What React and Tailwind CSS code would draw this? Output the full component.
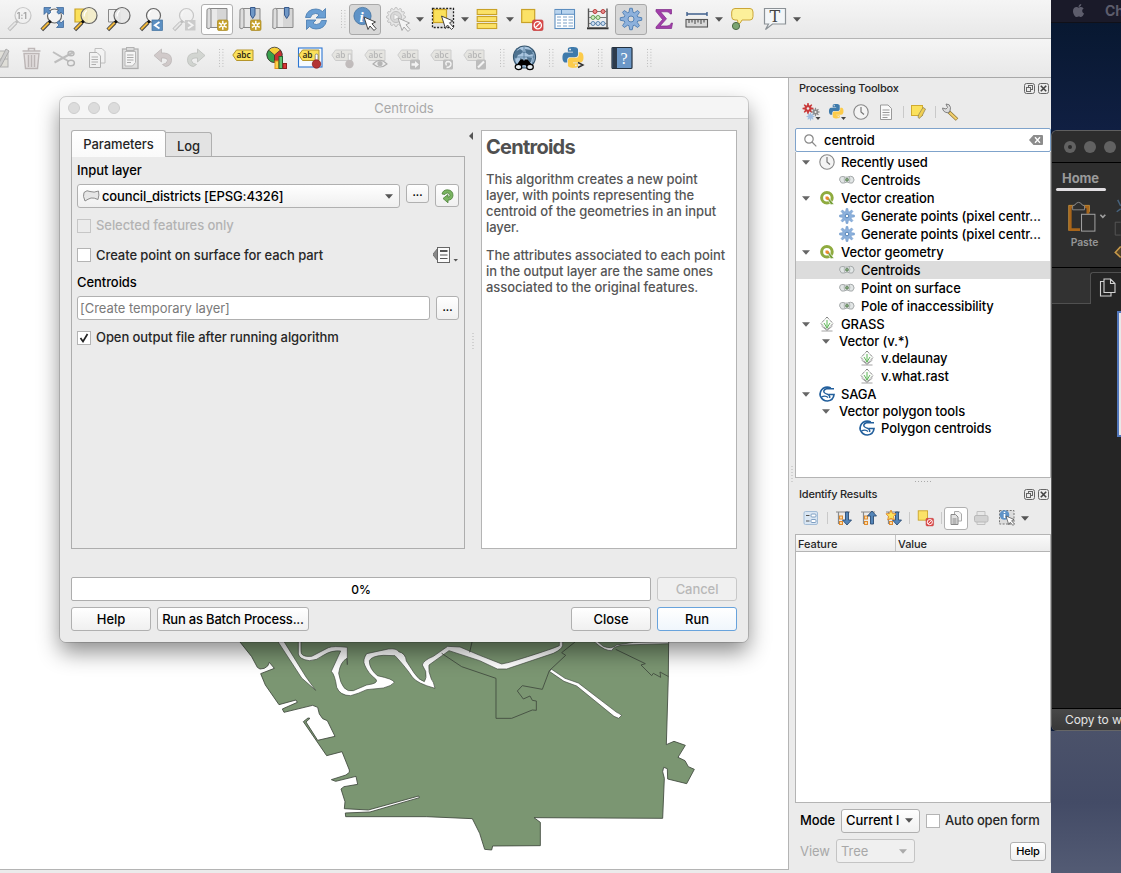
import React from "react";
import { FaApple } from "react-icons/fa";

const PY_TOP =
  "M14.25.18l.9.2.73.26.59.3.45.32.34.34.25.34.16.33.1.3.04.26.02.2-.01.13V8.5l-.05.63-.13.55-.21.46-.26.38-.3.31-.33.25-.35.19-.35.14-.33.1-.3.07-.26.04-.21.02H8.77l-.69.05-.59.14-.5.22-.41.27-.33.32-.27.35-.2.36-.15.37-.1.35-.07.32-.04.27-.02.21v3.06H3.17l-.21-.03-.28-.07-.32-.12-.35-.18-.36-.26-.36-.36-.35-.46-.32-.59-.28-.73-.21-.88-.14-1.05-.05-1.23.06-1.22.16-1.04.24-.87.32-.71.36-.57.4-.44.42-.33.42-.24.4-.16.36-.1.32-.05.24-.01h.16l.06.01h8.16v-.83H6.18l-.01-2.75-.02-.37.05-.34.11-.31.17-.28.25-.26.31-.23.38-.2.44-.18.51-.15.58-.12.64-.1.71-.06.77-.04.84-.02 1.27.05zm-6.3 1.98l-.23.33-.08.41.08.41.23.34.33.22.41.09.41-.09.33-.22.23-.34.08-.41-.08-.41-.23-.33-.33-.22-.41-.09-.41.09z";
const PY_BOTTOM =
  "M21.1 6.11l.28.06.32.12.35.18.36.27.36.35.35.47.32.59.28.73.21.88.14 1.04.05 1.23-.06 1.23-.16 1.04-.24.86-.32.71-.36.57-.4.45-.42.33-.42.24-.4.16-.36.09-.32.05-.24.02-.16-.01h-8.22v.82h5.84l.01 2.76.02.36-.05.34-.11.31-.17.29-.25.25-.31.24-.38.2-.44.17-.51.15-.58.13-.64.09-.71.07-.77.04-.84.01-1.27-.04-1.07-.14-.9-.2-.73-.25-.59-.3-.45-.33-.34-.34-.25-.34-.16-.33-.1-.3-.04-.25-.02-.2.01-.13v-5.34l.05-.64.13-.54.21-.46.26-.38.3-.32.33-.24.35-.2.35-.14.33-.1.3-.06.26-.04.21-.02.13-.01h5.84l.69-.05.59-.14.5-.21.41-.28.33-.32.27-.35.2-.36.15-.36.1-.35.07-.32.04-.28.02-.21V6.07h2.09l.14.01zm-6.47 14.25l-.23.33-.08.41.08.41.23.33.33.23.41.08.41-.08.33-.23.23-.33.08-.41-.08-.41-.23-.33-.33-.23-.41-.08-.41.08z";

function gearPath(cx, cy, outer, inner, teeth) {
  let d = "";
  for (let i = 0; i < teeth; i++) {
    const a = (i / teeth) * Math.PI * 2 - Math.PI / 2;
    const s = Math.PI / teeth;
    [[-0.75, inner], [-0.3, outer], [0.3, outer], [0.75, inner]].forEach(([k, r], j) => {
      d += (i === 0 && j === 0 ? "M" : "L") + (cx + r * Math.cos(a + k * s)).toFixed(2) + " " + (cy + r * Math.sin(a + k * s)).toFixed(2);
    });
  }
  return d + "Z";
}

function Ic({ children, faded }) {
  return (
    <svg viewBox="0 0 24 24" className={faded ? "size-6 shrink-0 opacity-40 grayscale-[60%] overflow-visible" : "size-6 shrink-0 overflow-visible"} fill="none">
      {children}
    </svg>
  );
}

function Slot({ children, state }) {
  return (
    <div className="flex w-[33px] shrink-0 items-center justify-center">
      {state ? (
        <div
          className={
            state === "on"
              ? "flex h-[31px] w-[32px] shrink-0 items-center justify-center rounded-[3px] border border-[#a9a9a9] bg-[#d8d8d8]"
              : "flex h-[31px] w-[32px] shrink-0 items-center justify-center rounded-[3px] border border-[#b0b0b0] bg-[#fdfdfd]"
          }
        >
          {children}
        </div>
      ) : (
        children
      )}
    </div>
  );
}

function Arrow() {
  return (
    <div className="flex w-[11.7px] shrink-0 items-center justify-center">
      <svg viewBox="0 0 8 5" className="h-[5px] w-[8px]"><path d="M0 .3H8L4 4.8Z" fill="#555" /></svg>
    </div>
  );
}

function Dots({ wide }) {
  return (
    <div className={wide ? "flex w-[16.5px] shrink-0 items-center justify-end pr-[3px]" : "flex w-[16px] shrink-0 items-center justify-end pr-[3px]"}>
      <svg viewBox="0 0 5 18" className="h-[18px] w-[5px]">
        {[0, 2.8, 5.6, 8.4, 11.2, 14, 16.8].map((y) => (
          <g key={y} fill="#bdbdbd"><rect x="0" y={y} width="1" height="1" /><rect x="3.4" y={y} width="1" height="1" /></g>
        ))}
      </svg>
    </div>
  );
}

function Mag({ x = 16, y = 8.5, r = 7.3, tint = "#f4f4f4", grey, fade = 0.8 }) {
  return (
    <g>
      <circle cx={x} cy={y} r={r} fill={tint} fillOpacity={fade} stroke={grey ? "#888" : "#666"} strokeWidth="1.2" />
      <path d={`M${x - 2} ${y - 5}Q${x - 5} ${y - 3} ${x - 4.8} ${y + 1}`} stroke="#fff" strokeWidth="1.3" />
      <path d="M10.8 13.8L8.5 16" stroke={grey ? "#777" : "#111"} strokeWidth="3" />
      <path d="M8.7 15.8L1.8 22.8" stroke={grey ? "#777" : "#444"} strokeWidth="3.8" />
      <path d="M8.7 15.6L2.2 22.2" stroke={grey ? "#ddd" : "#f2b93b"} strokeWidth="2" />
    </g>
  );
}

function Cursor({ x = 0, y = 0, c = "#444" }) {
  return <path transform={`translate(${x} ${y})`} d="M0 0L11.5 5L8 6.8L12 11.5L10 13.5L6 9L4 12.5Z" fill="#fff" stroke={c} strokeWidth="1" />;
}

function Scroll({ mark }) {
  return (
    <g>
      <path d="M5 1.5H22V20.5H5Z" fill="#d6d6d6" stroke="#888" strokeWidth="1" />
      <path d="M6 2H12V20H6Z" fill="#e9e9e9" />
      <path d="M2 2.5Q5.500 0 6 3V20Q4 23 1.800 21Z" fill="#ddd" stroke="#888" strokeWidth="1" />
      {mark && (
        <g>
          <rect x="12.500" y="13" width="10.500" height="10.500" rx="1.500" fill="#c8a42c" stroke="#a8871f" strokeWidth=".7" />
          <path d={gearPath(17.8, 18.2, 4.6, 2, 6)} fill="#fff" />
          <circle cx="17.800" cy="18.200" r="1.100" fill="#c8a42c" />
        </g>
      )}
    </g>
  );
}

function Ribbon({ x = 12.5 }) {
  return <path d={`M${x} .5H${x + 4.5}V8L${x + 2.2} 11.5L${x} 8Z`} fill="#6f97c6" stroke="#37598c" strokeWidth="1" />;
}

function Tag({ text = "abc", color }) {
  return (
    <g>
      <path d="M.8 9L4.500 4H21V14.500H4.500Z" fill={color || "#fbe15b"} stroke={color ? "#999" : "#b5952a"} strokeWidth="1" />
      <text x="4.500" y="12.200" fontSize="8.300" fontFamily="Noto Sans, sans-serif" fontWeight="600" fill={color ? "#666" : "#2e2a12"}>{text}</text>
    </g>
  );
}

const PyIcon = () => (
  <g>
    <g transform="translate(1.500 1) scale(.87)">
      <path d={PY_TOP} fill="#3e7aab" />
      <path d={PY_BOTTOM} fill="#fccb4a" />
    </g>
    <path d="M17 16.500L22 19L17 21.500" stroke="#333" strokeWidth="1.400" />
  </g>
);

const Deselect = () => (
  <g>
    <rect x="1.700" y="2.500" width="13" height="13" fill="#fbe267" stroke="#c9a227" strokeWidth="1.200" />
    <rect x="12.500" y="13" width="10.500" height="10.500" rx="1.500" fill="#dc4a4a" stroke="#c43a3a" strokeWidth=".7" />
    <circle cx="17.800" cy="18.200" r="3.600" stroke="#fff" strokeWidth="1.300" />
    <path d="M15.200 20.800L20.400 15.600" stroke="#fff" strokeWidth="1.300" />
  </g>
);

function TopToolbar() {
  return (
    <div className="flex h-[39px] shrink-0 overflow-hidden border-b border-[#b4b4b4] bg-gradient-to-b from-[#f5f5f5] to-[#e8e8e8] pl-[2px]">
      <Slot>
        <Ic faded>
          <Mag grey r={8} />
          <text x="9.800" y="11.800" fontSize="8.500" fontWeight="700" fontFamily="Inter, sans-serif" fill="#333">1:1</text>
        </Ic>
      </Slot>
      <Slot>
        <Ic>
          <Mag x={14.5} y={9} r={7} />
          <g fill="#5e8fc4" stroke="#345f93" strokeWidth=".7">
            <path d="M4 .5H11L8.700 2.800L11 5L9 7.200L6.500 5L4 7.500Z" />
            <path d="M23.500 .5V7.500L21 5L18.800 7.200L16.800 5L19 2.800L16.500 .5Z" />
            <path d="M23.500 20.500H16.500L19 18L16.800 15.800L19 13.600L21 16L23.500 13.500Z" />
          </g>
        </Ic>
      </Slot>
      <Slot><Ic><path d="M2 2H14V15H2Z" fill="#fbe15b" stroke="#c9a227" strokeWidth="1.200" /><Mag r={8} tint="#f3edc9" fade={0.92} /></Ic></Slot>
      <Slot><Ic><path d="M2.500 2.500H14V15H2.500Z" fill="#efefef" stroke="#888" /><Mag r={8} tint="#e6e6e6" fade={0.9} /></Ic></Slot>
      <Slot>
        <Ic>
          <Mag x={14.5} y={8.5} r={7} />
          <rect x="13" y="13" width="10.500" height="10.500" fill="#5b8fc2" stroke="#41719f" strokeWidth=".7" />
          <path d="M20.500 15L15.800 18.200L20.500 21.400" stroke="#fff" strokeWidth="1.800" />
        </Ic>
      </Slot>
      <Slot>
        <Ic faded>
          <Mag x={14.5} y={8.5} r={7} grey />
          <rect x="13" y="13" width="10.500" height="10.500" fill="#999" />
          <path d="M16 15L20.700 18.200L16 21.400" stroke="#fff" strokeWidth="1.800" />
        </Ic>
      </Slot>
      <Slot state="off"><Ic><Scroll mark /></Ic></Slot>
      <Slot><Ic><Scroll mark /><Ribbon /></Ic></Slot>
      <Slot><Ic><Scroll /><Ribbon x={13.5} /></Ic></Slot>
      <Slot>
        <Ic>
          <path d="M1.500 10.500Q3 2 12 2Q16 2 18.500 4.500L21.500 1.500V11H12L15 8Q13.500 6.500 11.500 6.500Q7.500 6.500 6.500 10.500Z" fill="#6a9fd4" stroke="#4579ad" strokeWidth=".8" />
          <path d="M22.500 13.500Q21 22 12 22Q8 22 5.500 19.500L2.500 22.500V13H12L9 16Q10.500 17.500 12.500 17.500Q16.500 17.500 17.500 13.500Z" fill="#6a9fd4" stroke="#4579ad" strokeWidth=".8" />
        </Ic>
      </Slot>
      <Dots wide />
      <Slot state="on">
        <Ic>
          <circle cx="9.500" cy="9" r="8.600" fill="#5f93c7" stroke="#41719f" strokeWidth=".8" />
          <text x="6.500" y="14.500" fontSize="15" fontFamily="Liberation Serif, serif" fontStyle="italic" fontWeight="700" fill="#fff">i</text>
          <Cursor x={11} y={10} />
        </Ic>
      </Slot>
      <Slot>
        <Ic faded>
          <path d={gearPath(10, 10, 9.5, 7.8, 12)} fill="#ddd" stroke="#777" />
          <circle cx="10" cy="10" r="5.500" fill="#bbb" stroke="#777" />
          <path d="M8 7L13.500 10L8 13Z" fill="#fff" stroke="#666" strokeWidth=".6" />
          <Cursor x={12} y={11} />
        </Ic>
      </Slot>
      <Arrow />
      <Slot>
        <Ic>
          <rect x="1.500" y="1.500" width="21" height="19" fill="#e0e0e0" stroke="#222" strokeWidth="1.300" strokeDasharray="2 1.400" />
          <rect x="2.500" y="2.500" width="13" height="13" fill="#fbe15b" stroke="#c9a227" strokeWidth="1.200" />
          <Cursor x={10.5} y={9} />
        </Ic>
      </Slot>
      <Arrow />
      <Slot>
        <Ic>
          <g fill="#fbe267" stroke="#c9a227" strokeWidth="1.100">
            <rect x="2.200" y="2.500" width="19.500" height="5" /><rect x="2.200" y="9.500" width="19.500" height="5" /><rect x="2.200" y="16.500" width="19.500" height="5" />
          </g>
        </Ic>
      </Slot>
      <Arrow />
      <Slot><Ic><Deselect /></Ic></Slot>
      <Slot>
        <Ic>
          <rect x="2" y="2.500" width="19.500" height="19" fill="#fff" stroke="#5c8ec0" strokeWidth="1.100" />
          <rect x="2.500" y="3" width="18.500" height="4" fill="#b9d4ee" />
          <path d="M2 7.300H21.500M8.500 2.500V7" stroke="#5c8ec0" />
          <path d="M4 10H8M10 10H14M15.500 10H20M4 13H8M10 13H14M15.500 13H20M4 16H8M10 16H14M15.500 16H20M4 19H8M10 19H14M15.500 19H20" stroke="#7ba0c6" />
        </Ic>
      </Slot>
      <Slot>
        <Ic>
          <path d="M2.500 1.500V20M21 1.500V20" stroke="#555" strokeWidth="1.400" />
          <path d="M1 21.300H22.500" stroke="#333" strokeWidth="2" />
          <path d="M3 4.500H21M3 10.500H21M3 16.500H21" stroke="#777" />
          <g fill="#e88b8b" stroke="#b93c3c"><circle cx="9" cy="4.500" r="2" /><circle cx="17" cy="4.500" r="2" /></g>
          <g fill="#cdeebf" stroke="#68a057"><circle cx="7" cy="10.500" r="2" /><circle cx="12" cy="10.500" r="2" /></g>
          <g fill="#cfe1f3" stroke="#5b85b0"><circle cx="7" cy="16.500" r="2" /><circle cx="12" cy="16.500" r="2" /><circle cx="17" cy="16.500" r="2" /></g>
        </Ic>
      </Slot>
      <Slot state="on">
        <Ic>
          <path d={gearPath(12, 12, 10.8, 7, 8)} fill="#8db1dc" stroke="#5583b6" strokeWidth="1" strokeLinejoin="round" />
          <circle cx="12" cy="12" r="3" fill="#d8d8d8" stroke="#5583b6" />
        </Ic>
      </Slot>
      <Slot>
        <Ic><path d="M4 2.500H19.500V7H18.200Q17.700 4.800 15 4.800H8.500L14.500 11.800L8 19H15Q18.500 19 19.300 16H20.500L19.500 21.500H4V20L10.500 12.500L4 4.500Z" fill="#a23eaa" stroke="#7d2a86" strokeWidth=".7" /></Ic>
      </Slot>
      <Slot>
        <Ic>
          <path d="M2 7H22M2 5V9M22 5V9" stroke="#3f5f8c" strokeWidth="1.400" />
          <rect x="1" y="12.500" width="21.500" height="7.500" fill="#d9d9d9" stroke="#555" strokeWidth="1.100" />
          <path d="M4 13V16M7 13V15.500M10 13V17M13 13V15.500M16 13V17M19 13V15.500" stroke="#444" />
        </Ic>
      </Slot>
      <Arrow />
      <Slot>
        <Ic>
          <path d="M5 1.500H20Q23 1.500 23 5V9.500Q23 13 20 13H12Q11 16.500 7 18Q8.500 15 7.500 13H5Q1.700 13 1.700 9.500V5Q1.700 1.500 5 1.500Z" fill="#fcf09a" stroke="#cba638" strokeWidth="1" />
          <circle cx="6" cy="19" r="3.600" fill="#7ba571" stroke="#4d6b47" />
        </Ic>
      </Slot>
      <Slot>
        <Ic>
          <path d="M1.500 1.500H22.500V17H9.500L2.500 22.500L5.500 17H1.500Z" fill="#f3f6f8" stroke="#8b9196" strokeWidth="1.200" />
          <text x="6.500" y="14.500" fontSize="16" fontFamily="DejaVu Serif, serif" fill="#444">T</text>
        </Ic>
      </Slot>
      <Arrow />
    </div>
  );
}

function SecondToolbar() {
  const badge = (kind) => (
    <g>
      <rect x="13" y="13.500" width="10" height="10" rx="1.500" fill="#777" />
      {kind === "arrow" && <path d="M14.500 17.300H18V15L22 18.500L18 22V19.700H14.500Z" fill="#fff" />}
      {kind === "rot" && <path d="M16.500 19.500Q14.500 15.500 18.500 15.500Q21.500 16 20.800 19Q20 21.500 16.500 21.500" stroke="#fff" strokeWidth="1.500" />}
      {kind === "pen" && <path d="M15 21.500L21 15.500" stroke="#fff" strokeWidth="2.200" />}
    </g>
  );
  return (
    <div className="flex h-[39px] shrink-0 overflow-hidden border-b border-[#a8a8a8] bg-gradient-to-b from-[#f5f5f5] to-[#e8e8e8]">
      <div className="flex w-[14.5px] shrink-0 items-center justify-end overflow-hidden pr-[6px]">
        <Ic faded>
          <rect x="2" y="5" width="21" height="16" fill="#cfc9a4" stroke="#555" />
          <path d="M2 13H23" stroke="#555" />
          <path d="M13 19L21 3L24 5L16 20L12.500 22Z" fill="#999" stroke="#444" />
        </Ic>
      </div>
      <Slot>
        <Ic faded>
          <path d="M5 7.500L6.500 22.500H18.500L20 7.500Z" fill="#e5c8c8" stroke="#865f5f" strokeWidth="1.400" />
          <path d="M3.500 5H21.500M9.500 5V2.500H15.500V5M9.500 9V21M12.500 9V21M15.500 9V21" stroke="#865f5f" strokeWidth="1.500" />
        </Ic>
      </Slot>
      <Slot>
        <Ic faded>
          <path d="M1 6L17 15.500M2.500 16.500L21 6.500" stroke="#777" strokeWidth="2" />
          <ellipse cx="19" cy="7.500" rx="3" ry="2.300" stroke="#666" strokeWidth="1.400" /><ellipse cx="19" cy="17" rx="3.400" ry="2.800" stroke="#666" strokeWidth="1.400" />
        </Ic>
      </Slot>
      <Slot>
        <Ic faded>
          <path d="M10 2.500H17L20 5.500V17H10Z" fill="#f8f8f8" stroke="#777" />
          <path d="M4.500 6.500H12L15.500 10V21.500H4.500Z" fill="#f8f8f8" stroke="#555" />
          <path d="M6.500 11H13M6.500 13.500H13M6.500 16H13M6.500 18.500H11" stroke="#555" />
        </Ic>
      </Slot>
      <Slot>
        <Ic faded>
          <rect x="4.500" y="3" width="15.500" height="19.500" fill="#ccc" stroke="#555" strokeWidth="1.300" />
          <path d="M7 5.500H17.500V16.500L14.500 20H7Z" fill="#fff" stroke="#666" />
          <rect x="8.500" y="1.500" width="7.500" height="3" fill="#bbb" stroke="#555" />
          <path d="M9 9H15.500M9 11.500H15.500M9 14H15.500M9 16.500H13" stroke="#444" />
        </Ic>
      </Slot>
      <Slot><Ic faded><path d="M3 9.500L10.500 3V7H13Q21 7.500 20.500 14.500Q20 20 14.500 20.500L11.500 18.500Q16.500 17.500 16.500 14.500Q16.500 12 13 12H10.500V16Z" fill="#b98f8f" stroke="#7c5c5c" strokeWidth=".8" /></Ic></Slot>
      <Slot><Ic faded><path d="M21 9.500L13.500 3V7H11Q3 7.500 3.500 14.500Q4 20 9.500 20.500L12.500 18.500Q7.500 17.500 7.500 14.500Q7.500 12 11 12H13.500V16Z" fill="#9fb49a" stroke="#687a64" strokeWidth=".8" /></Ic></Slot>
      <div className="flex w-[15px] shrink-0 items-center justify-end pr-[1px]"><Dots /></div>
      <Slot><Ic><Tag /></Ic></Slot>
      <Slot>
        <Ic>
          <circle cx="9.500" cy="8.800" r="7.600" fill="#f6cf38" stroke="#333" strokeWidth=".8" />
          <path d="M9.500 9L3.600 4A7.600 7.600 0 0 0 9.500 16.400Z" fill="#37a04c" stroke="#333" strokeWidth=".7" />
          <path d="M9.500 9L15.400 4A7.600 7.600 0 0 1 9.500 16.400Z" fill="#c92f2f" stroke="#333" strokeWidth=".7" />
          <rect x="10" y="15" width="3.500" height="7.500" fill="#fbd34c" stroke="#e28f1a" /><rect x="14" y="10.500" width="3.500" height="12" fill="#5fc06f" stroke="#28632f" /><rect x="18" y="17.500" width="3.500" height="5" fill="#d93636" stroke="#8f1c1c" />
        </Ic>
      </Slot>
      <Slot>
        <Ic>
          <rect x=".5" y="2" width="23.500" height="19" fill="#f6fafe" stroke="#2c76d2" strokeWidth="1.100" />
          <Tag text="ab" />
          <rect x="17.200" y="8" width="2.800" height="9" rx="1.400" fill="#fff" stroke="#777" strokeWidth=".8" />
          <circle cx="18.500" cy="18" r="4.200" fill="#b33434" stroke="#8b2222" strokeWidth=".8" />
        </Ic>
      </Slot>
      <Slot><Ic faded><Tag text="ab" color="#d9d4bb" /><rect x="17.200" y="8" width="2.800" height="9" fill="#fff" stroke="#777" strokeWidth=".8" /><circle cx="18.500" cy="18" r="4.200" fill="#8f7070" /></Ic></Slot>
      <Slot><Ic faded><Tag color="#d9d4bb" /><path d="M9 18Q16 10.500 23 18Q16 24 9 18Z" fill="#eee" stroke="#555" strokeWidth="1.100" /><circle cx="16" cy="17.500" r="2.600" fill="#666" /></Ic></Slot>
      <Slot><Ic faded><Tag color="#d9d4bb" />{badge("arrow")}</Ic></Slot>
      <Slot><Ic faded><Tag color="#d9d4bb" />{badge("rot")}</Ic></Slot>
      <Slot><Ic faded><Tag color="#d9d4bb" />{badge("pen")}</Ic></Slot>
      <Dots />
      <Slot>
        <Ic>
          <circle cx="12.500" cy="11" r="11" fill="#aac6e0" stroke="#37566f" strokeWidth="1.200" />
          <path d="M3 6L8 3L11 5L9 8L6 9L4 13L2 10ZM13 3L19 4L21 8L17 9L14 7ZM15 11L20 12L19 16L16 17ZM8 12L11 13L9 16Z" fill="#4f7390" />
          <path d="M12 0V22M2 11H23M3 5Q12 8 21 5M5 2Q0 11 5 20M19 2Q24 11 19 20" stroke="#48708f" strokeWidth=".7" />
          <path d="M4 20L8.500 13.500H11L12 15L13 13.500H15.500L21 20L17 22L13 19H11L7 22Z" fill="#000" />
          <ellipse cx="6.500" cy="21" rx="3.300" ry="2.600" fill="#e6edf2" stroke="#000" strokeWidth="1.200" /><ellipse cx="18" cy="21" rx="3.300" ry="2.600" fill="#e6edf2" stroke="#000" strokeWidth="1.200" />
        </Ic>
      </Slot>
      <Dots />
      <Slot><Ic><PyIcon /></Ic></Slot>
      <Dots />
      <Slot>
        <Ic>
          <rect x="2" y="1.500" width="20" height="21" rx="1" fill="#6b97c7" stroke="#23303e" strokeWidth="1.200" />
          <rect x="2.500" y="2" width="4.500" height="20" fill="#2d3b4c" />
          <text x="10.500" y="17.500" fontSize="16" fontFamily="Liberation Serif, serif" fill="#fff">?</text>
        </Ic>
      </Slot>
      <Dots />
    </div>
  );
}

function MapCanvas() {
  return (
    <svg viewBox="0 0 788 791" className="h-[791px] w-[788px]">
      <g transform="translate(220 552) scale(.33333)" strokeLinejoin="round" stroke="#414a3f" strokeWidth="2.600">
        <path
          fill="#7b9672"
          d="M60 36L95 80L112 112L120 117L133 115L143 108L148 97L163 115L122 131L136 165L177 224L228 210L232 217L187 237L192 247L278 226L293 232L298 252L308 266L322 272L345 319L293 331L258 276L270 265L264 264L250 275L320 377L366 365L388 420L388 427L378 435L334 449L347 454L408 439L413 463L372 470L363 477L375 515L373 536L445 540L596 498L598 503L450 546L376 549L377 560L620 560L757 566L779 610L794 658L815 660L818 648L961 647L961 577L942 563L1328 565L1333 445L1328 425L1331 412L1342 416L1343 447L1400 461L1423 418L1405 410L1395 392L1374 382L1396 346L1362 334L1339 344L1345 140L1346 20L60 20Z"
        />
        <path
          fill="#fff"
          strokeWidth="2"
          d="M235 20V72Q238 88 268 92Q290 92 310 76Q335 60 362 63L334 124Q345 135 350 172Q360 197 392 197Q415 191 440 179L490 174Q515 168 523 157Q520 147 472 137Q447 115 448 92Q455 78 490 76L525 77Q560 115 577 141Q590 160 645 175Q641 155 634 147Q624 125 627 105L687 62L779 92L832 117L860 117L1000 70Q1026 58 1028 46V20H1018V47Q990 60 868 97L845 102L779 76L720 51L683 49L640 79Q610 91 607 105L617 124Q621 145 613 155Q596 150 583 130L559 93Q557 70 536 65Q530 54 505 57L440 71Q427 90 434 105Q444 130 467 147Q479 160 440 165L400 182Q366 190 356 130Q361 95 381 85L382 104V52Q340 47 325 53L275 79Q241 82 243 62V20Z"
        />
        <path fill="#fff" strokeWidth="2" d="M164 20L183 20L258 141L287 181L245 144Z" />
        <path fill="#fff" strokeWidth="2" d="M988 124L995 118L1035 145L1075 159L1190 247L1196 250L1205 256L1196 265L1182 259L1070 168L1032 154Z" />
        <path fill="#fff" strokeWidth="2" d="M1108 20L1128 40Q1155 63 1175 62Q1180 49 1210 45L1346 41V34L1240 37L1190 45Q1175 59 1150 49L1132 34Z" />
        <path fill="none" d="M749 67L756 36M665 70L725 110L828 145V265H875L937 240L949 241V213L937 211L930 198L910 207L892 183L907 167L967 178L988 122L1037 76L1025 68L1065 36M1187 58L1276 101L1263 105L1295 137L1300 130L1322 142L1320 126L1346 140" />
      </g>
    </svg>
  );
}

const BTN = "flex shrink-0 items-center justify-center rounded-[3px] border border-[#b0b0b0] bg-gradient-to-b from-white to-[#f0f0f0]";

function Check({ on, off }) {
  return (
    <div className={off ? "size-[14px] shrink-0 border border-[#c6c6c6] bg-[#ebebeb]" : "flex size-[14px] shrink-0 items-center justify-center border border-[#b4b4b4] bg-white"}>
      {on && <svg viewBox="0 0 10 10" className="size-[10px]"><path d="M1.500 5L4 8.500L8.500 1" fill="none" stroke="#222" strokeWidth="1.700" /></svg>}
    </div>
  );
}

function Dialog() {
  return (
    <div className="absolute left-[60px] top-[97px] flex h-[545px] w-[688px] flex-col overflow-hidden rounded-[6px] bg-[#ebebeb] text-[13px] font-medium text-[#262626] outline outline-1 outline-black/15">
      <div className="flex h-[22px] shrink-0 items-center border-b border-[#cfcfcf] bg-[#f5f5f5] pl-[8px]">
        <div className="flex w-[60px] gap-[8px]">
          <div className="size-[12px] rounded-full border border-[#cdcdcd] bg-[#dcdcdc]" />
          <div className="size-[12px] rounded-full border border-[#cdcdcd] bg-[#dcdcdc]" />
          <div className="size-[12px] rounded-full border border-[#cdcdcd] bg-[#dcdcdc]" />
        </div>
        <div className="flex-1 pr-[68px] pt-px text-center font-normal tracking-[0px] text-[#a9a9a9]">Centroids</div>
      </div>
      <div className="flex flex-1 flex-col px-[11px] pt-[11px]">
        <div className="flex h-[419px]">
          <div className="flex w-[394px] shrink-0 flex-col">
            <div className="flex h-[26px] items-end">
              <div className="relative z-10 -mb-[1px] flex h-[27px] w-[95px] items-center justify-center rounded-t-[3px] border border-b-0 border-[#b0b0b0] bg-gradient-to-b from-white to-[#fafafa] pt-[1px]">Parameters</div>
              <div className="flex h-[24px] w-[46px] items-center justify-center rounded-tr-[3px] border border-b-0 border-l-0 border-[#b0b0b0] bg-[#e3e3e3] pt-[3px]">Log</div>
            </div>
            <div className="flex flex-1 flex-col border border-[#adadad] px-[5px]">
              <div className="flex h-[27px] items-center text-black">Input layer</div>
              <div className="flex h-[24px] justify-between">
                <div className="flex h-[24px] w-[323px] items-center rounded-[3px] border border-[#b0b0b0] bg-gradient-to-b from-white to-[#efefef] pl-[4px] pr-[6px] text-black">
                  <svg viewBox="0 0 18 14" className="mr-[2px] h-[14px] w-[18px]"><path d="M2 3.500Q5 .5 8 2.500Q12 4 16.500 2Q17.500 6 16 10.500Q12 8.500 9 9Q6 10 3 12Q.5 7 2 3.500Z" fill="#e6e6e6" stroke="#8b8b8b" /></svg>
                  <span className="flex-1 tracking-[-0.14px]">council_districts [EPSG:4326]</span>
                  <svg viewBox="0 0 8 5" className="h-[5px] w-[8px]"><path d="M0 .3H8L4 4.800Z" fill="#555" /></svg>
                </div>
                <div className={`${BTN} h-[19px] w-[23px] pb-[3px] text-[10px] font-bold text-black`}>...</div>
                <div className={`${BTN} h-[23px] w-[24px]`}>
                  <svg viewBox="0 0 16 16" className="size-[16px]"><path d="M3 6Q4 1.800 8.500 1.800Q14 2.200 14 7.500Q13.500 12 9 12.200V14.800L4 10.500L9 6.500V9.200Q11 9 11 7.300Q10.800 5 8.300 5Q6.500 5 6 6.500Z" fill="#79b461" stroke="#4c8038" strokeWidth=".8" /></svg>
                </div>
              </div>
              <div className="flex h-[35px] items-center gap-[5px] text-[#b3b3b3]"><Check off />Selected features only</div>
              <div className="flex h-[24px] items-center gap-[5px]">
                <Check /><span className="flex-1">Create point on surface for each part</span>
                <svg viewBox="0 0 26 18" className="h-[18px] w-[26px]">
                  <path d="M4.500 2.500L-.3 8.500L4.500 14.500Z" fill="#888" stroke="#666" strokeWidth=".8" />
                  <rect x="4.500" y="1.500" width="12" height="15" fill="#fafafa" stroke="#666" />
                  <path d="M7 5H14.500" stroke="#555" strokeWidth="2" /><path d="M7 9H14.500M7 12.500H14.500" stroke="#555" />
                  <path d="M20.500 13H25L22.700 15.500Z" fill="#555" />
                </svg>
              </div>
              <div className="flex h-[29px] items-center pt-[2px] text-black">Centroids</div>
              <div className="flex h-[24px] justify-between">
                <div className="flex w-[353px] items-center rounded-[3px] border border-[#b0b0b0] bg-white pl-[2px] font-normal tracking-[-0.05px] text-[#7a7a7a]">[Create temporary layer]</div>
                <div className={`${BTN} h-[24px] w-[23px] pb-[2px] text-[10px] font-bold text-black`}>...</div>
              </div>
              <div className="flex h-[35px] items-center gap-[5px]"><Check on />Open output file after running algorithm</div>
            </div>
          </div>
          <div className="flex w-[16px] shrink-0 flex-col items-center pt-[2px]">
            <svg viewBox="0 0 4 8" className="mr-[4px] h-[8px] w-[4px]"><path d="M4 0V8L0 4Z" fill="#555" /></svg>
            <svg viewBox="0 0 2 16" className="mt-[193px] h-[16px] w-[2px]"><path d="M1 0V16" stroke="#b5b5b5" strokeDasharray="1 2" /></svg>
          </div>
          <div className="w-[256px] shrink-0 border border-[#b4b4b4] bg-white px-[4px] pt-[4px] leading-[16px] text-[#565656]">
            <div className="text-[20px] font-bold leading-[24px] tracking-[-0.75px] text-[#505050]">Centroids</div>
            <div className="mt-[12px]">This algorithm creates a new point<br />layer, with points representing the<br />centroid of the geometries in an input<br />layer.</div>
            <div className="mt-[12px]">The attributes associated to each point<br />in the output layer are the same ones<br />associated to the original features.</div>
          </div>
        </div>
        <div className="mt-[28px] flex h-[24px] justify-between">
          <div className="flex w-[580px] items-center justify-center rounded-[2px] border border-[#adadad] bg-white pt-px text-[12px] text-black">0%</div>
          <div className="flex w-[80px] items-center justify-center rounded-[3px] border border-[#c8c8c8] bg-[#f0f0f0] text-[#b8b8b8]">Cancel</div>
        </div>
        <div className="mt-[6px] flex h-[24px] gap-[6px] text-black">
          <div className={`${BTN} w-[80px]`}>Help</div>
          <div className={`${BTN} w-[152px] tracking-[-0.2px]`}>Run as Batch Process...</div>
          <div className="flex-1" />
          <div className={`${BTN} w-[80px]`}>Close</div>
          <div className="flex w-[80px] items-center justify-center rounded-[3px] border border-[#68a3dc] bg-gradient-to-b from-white to-[#f0f6fc]">Run</div>
        </div>
      </div>
    </div>
  );
}

function PanelTitle({ children }) {
  return (
    <div className="flex h-[20px] shrink-0 items-center pl-[4px] pr-[2px] text-[11px] font-medium tracking-[-0.2px] text-[#262626]">
      <span className="flex-1">{children}</span>
      <svg viewBox="0 0 25 11" className="h-[11px] w-[25px]" fill="none" stroke="#666">
        <rect x=".5" y=".5" width="10" height="10" rx="2" /><rect x="4.500" y="2.500" width="4" height="4" /><rect x="2.500" y="4.500" width="4" height="4" fill="#ebebeb" />
        <rect x="14.500" y=".5" width="10" height="10" rx="2" /><path d="M16.800 2.800L22.200 8.200M22.200 2.800L16.800 8.200" stroke="#444" strokeWidth="1.600" />
      </svg>
    </div>
  );
}

function Sm({ children, w = "w-[25px]", faded }) {
  return (
    <div className={`flex ${w} shrink-0 items-center justify-center`}>
      <svg viewBox="0 0 18 18" fill="none" className={faded ? "size-[18px] shrink-0 overflow-visible opacity-50" : "size-[18px] shrink-0 overflow-visible"}>{children}</svg>
    </div>
  );
}

const Clock = () => (
  <g>
    <circle cx="9" cy="9" r="7.200" fill="#f4f4f4" stroke="#888" strokeWidth="1.100" />
    <path d="M9 4V9L12 11.500" stroke="#777" strokeWidth="1.200" />
  </g>
);

const TREE_ICONS = {
  clock: <Clock />,
  q: (
    <g>
      <circle cx="8.900" cy="8.700" r="5.300" stroke="#8fab3f" strokeWidth="3" />
      <path d="M8.500 8.500L10.500 8.500L16 15.300L12.800 15.800Z" fill="#75a038" stroke="#fff" strokeWidth=".6" />
      <path d="M7.500 7.500H10L11.500 9.500L9.500 11.300L7.500 10Z" fill="#e9892f" />
    </g>
  ),
  link: (
    <g>
      <path d="M5 5.500Q8 6.500 9.500 6Q13 4.500 15 6Q17.500 9 14.500 12Q12 12.500 9 11Q6 12.500 3.500 12Q.5 9 2 6.500Q3 5.500 5 5.500Z" fill="#e2e6e6" stroke="#a5a9aa" strokeWidth="1" />
      <path d="M6.500 6Q5.500 9 7 11.800M11.500 6Q12.500 9 11 11.500" stroke="#a5a9aa" strokeWidth=".8" />
      <circle cx="9" cy="8.700" r="1.500" fill="#7fa579" stroke="#54754f" strokeWidth=".7" />
    </g>
  ),
  gear: (
    <g>
      <path d={gearPath(9, 9, 7.5, 4.6, 8)} fill="#8db1dc" stroke="#6b96c7" strokeWidth=".6" />
      <circle cx="9" cy="9" r="1.800" fill="#fff" stroke="#5583b6" />
    </g>
  ),
  grass: (
    <g>
      <path d="M9 2L15 8.500L9 15L3 8.500Z" fill="#fbfdfa" stroke="#555" strokeWidth="1" strokeDasharray="1 .9" />
      <path d="M9 5V13.500M9 13L6 8M9 13L12 8" stroke="#5fb559" strokeWidth="1" />
      <path d="M3.500 11L9 15.500L14.500 11M3.500 16H14.500" stroke="#999" strokeWidth=".9" />
    </g>
  ),
  saga: (
    <g stroke="#225f9c" strokeWidth="1.700">
      <path d="M12.800 3Q9 1 5.300 3.200Q1.200 6.500 2.300 11Q4.500 16 9.500 16Q15.500 15.300 16 9.500H10.500" />
      <path d="M16 3.800H8.500Q5.500 4.500 5.800 7Q6.500 8.500 10 9.500Q12.500 11 11.500 13M3 12.500Q7 9.800 10 12.500" strokeWidth="1.400" />
    </g>
  ),
};

const TREE = [
  [0, "clock", "Recently used"],
  [1, "link", "Centroids"],
  [0, "q", "Vector creation"],
  [1, "gear", "Generate points (pixel centr..."],
  [1, "gear", "Generate points (pixel centr..."],
  [0, "q", "Vector geometry"],
  [1, "link", "Centroids", true],
  [1, "link", "Point on surface"],
  [1, "link", "Pole of inaccessibility"],
  [0, "grass", "GRASS"],
  [3, null, "Vector (v.*)"],
  [2, "grass", "v.delaunay"],
  [2, "grass", "v.what.rast"],
  [0, "saga", "SAGA"],
  [3, null, "Vector polygon tools"],
  [2, "saga", "Polygon centroids"],
];

function TreeRow({ row }) {
  const [level, icon, label, sel] = row;
  const pad = ["pl-[6px]", "pl-[42px]", "pl-[62px]", "pl-[26px]"][level];
  const branch = level === 0 || level === 3;
  return (
    <div className={`flex ${level === 3 ? "h-[16px]" : "h-[18px]"} shrink-0 items-center ${pad} ${sel ? "bg-[#dcdcdc]" : ""}`}>
      {branch && <svg viewBox="0 0 8 5" className="h-[5px] w-[8px] shrink-0"><path d="M0 .3H8L4 4.800Z" fill="#666" /></svg>}
      {icon && (
        <svg viewBox="0 0 18 18" fill="none" className={level === 0 ? "ml-[8px] mr-[5px] size-[18px] shrink-0" : "mr-[5px] size-[18px] shrink-0"}>
          {TREE_ICONS[icon]}
        </svg>
      )}
      {level === 3 && <span className="w-[9px] shrink-0" />}
      <span className="whitespace-nowrap tracking-[-0.11px]">{label}</span>
    </div>
  );
}

const ListArrow = ({ up, star }) => (
  <g>
    <path d="M1 3H15M3.500 3V14.500H6M3.500 9H6" stroke="#8a8a8a" strokeWidth="1.200" />
    <rect x="4.500" y="7" width="3" height="3" fill="#fbd9a5" stroke="#e08b2c" /><rect x="4.500" y="12.500" width="3" height="3" fill="#fbd9a5" stroke="#e08b2c" />
    <path d={up ? "M12 2L16.500 7H13.500V15H10.500V7H7.500Z" : "M12 16L16.500 11H13.500V3H10.500V11H7.500Z"} fill="#5485b8" stroke="#2b4d75" strokeWidth=".9" />
    {star && <path d="M6 1L7.500 4.500L11 4.800L8.500 7.500L9.300 11L6 9.200L2.700 11L3.500 7.500L1 4.800L4.500 4.500Z" fill="#fbe15b" stroke="#e08b2c" strokeWidth=".9" />}
  </g>
);

const VSep = ({ w }) => <div className={`flex ${w} shrink-0 items-center justify-center`}><div className="h-[12px] w-px bg-[#c9c9c9]" /></div>;

function SidePanel() {
  return (
    <div className="flex w-[256px] shrink-0 flex-col text-[13px] font-medium text-black">
      <PanelTitle>Processing Toolbox</PanelTitle>
      <div className="flex h-[30px] shrink-0 items-center pb-[2px] pl-[3px]">
        <Sm>
          <path d={gearPath(6, 5.5, 5.5, 3.5, 8)} fill="#c93a3a" /><circle cx="6" cy="5.500" r="1.300" fill="#eee" />
          <path d={gearPath(13.5, 9, 4.2, 2.6, 8)} fill="#8a8a8a" /><circle cx="13.500" cy="9" r="1" fill="#eee" />
          <path d={gearPath(8.5, 13.5, 4, 2.4, 8)} fill="#9fbde0" />
          <path d="M13.500 14H18.500L16 17Z" fill="#444" />
        </Sm>
        <Sm w="w-[27px]">
          <g transform="translate(1 1) scale(.6)"><path d={PY_TOP} fill="#3e7aab" /><path d={PY_BOTTOM} fill="#fccb4a" /></g>
          <path d="M13 14H18L15.500 17Z" fill="#444" />
        </Sm>
        <Sm w="w-[22px]"><Clock /></Sm>
        <Sm w="w-[28px]">
          <path d="M3.500 2H11L14.500 5.500V16.500H3.500Z" fill="#fafafa" stroke="#999" />
          <path d="M5.500 7H12.500M5.500 9.500H12.500M5.500 12H12.500M5.500 14.500H10.500" stroke="#999" />
        </Sm>
        <VSep w="w-[6px]" />
        <Sm w="w-[24px]">
          <rect x="2.500" y="2.500" width="11" height="10" fill="#fbe15b" stroke="#d0aa30" />
          <path d="M9 14L10 11L14 4.500L16.500 6L13 13L10 15.500Z" fill="#f1cf52" stroke="#93885c" strokeWidth=".8" />
        </Sm>
        <VSep w="w-[10px]" />
        <Sm w="w-[20px]">
          <path d="M8 9L16 16.500" stroke="#8a7434" strokeWidth="3.600" /><path d="M8.500 9.500L15.700 16.200" stroke="#f3cf6c" strokeWidth="2.200" />
          <path d="M1.500 5L5 6L6.500 4.500L5 1Q9 .8 9.500 4.500L9 8L7 9.800Q2 9.500 1.500 5Z" fill="#dcdcdc" stroke="#777" strokeWidth=".9" />
        </Sm>
      </div>
      <div className="flex h-[24px] shrink-0 items-center rounded-[2px] border border-[#7fa3cb] bg-white pl-[8px] pr-[7px]">
        <svg viewBox="0 0 13 13" className="mr-[7px] size-[13px]" fill="none" stroke="#888" strokeWidth="1.200"><circle cx="5" cy="5" r="4.200" /><path d="M8 8L12.300 12.300" /></svg>
        <span className="flex-1">centroid</span>
        <svg viewBox="0 0 14 10" className="h-[10px] w-[14px]"><path d="M4.500 0H13Q14 0 14 1V9Q14 10 13 10H4.500L0 5Z" fill="#8c8c8c" /><path d="M6 2.300L11 7.700M11 2.300L6 7.700" stroke="#fff" strokeWidth="1.300" /></svg>
      </div>
      <div className="flex h-[326px] shrink-0 flex-col border border-t-0 border-[#b4b4b4] bg-white pt-px">
        {TREE.map((r, i) => <TreeRow key={i} row={r} />)}
      </div>
      <div className="flex h-[6px] shrink-0 items-center justify-center"><svg viewBox="0 0 17 1" className="h-px w-[17px]"><path d="M0 .5H17" stroke="#aaa" strokeDasharray="1 2" /></svg></div>
      <PanelTitle>Identify Results</PanelTitle>
      <div className="flex h-[30px] shrink-0 items-center pb-[2px] pl-[3px]">
        <Sm>
          <rect x="2" y="2.500" width="13.500" height="13" rx="1.500" fill="#d9e6f3" stroke="#a3bcd6" />
          <path d="M4 6.500H7.500M4 12H7.500" stroke="#555" /><rect x="9" y="5" width="5" height="3" rx="1" fill="#fff" stroke="#7f9fc2" /><rect x="9" y="10.500" width="5" height="3" rx="1" fill="#fff" stroke="#7f9fc2" />
        </Sm>
        <VSep w="w-[8px]" />
        <Sm><ListArrow /></Sm>
        <Sm><ListArrow up /></Sm>
        <Sm><ListArrow star /></Sm>
        <VSep w="w-[7px]" />
        <Sm w="w-[25px]"><g transform="scale(.72)"><Deselect /></g></Sm>
        <VSep w="w-[6px]" />
        <div className="flex h-[23px] w-[24px] shrink-0 items-center justify-center rounded-[3px] border border-[#b0b0b0] bg-white">
          <svg viewBox="0 0 18 18" className="size-[18px] shrink-0" fill="none">
            <path d="M7.500 2.500H12L14.500 5V12H7.500Z" fill="#f5f5f5" stroke="#aaa" /><path d="M4 5.500H8.500L11 8V15.500H4Z" fill="#e2e2e2" stroke="#888" /><path d="M5.500 10H9.500M5.500 12H9.500M5.500 14H9.500" stroke="#888" />
          </svg>
        </div>
        <Sm w="w-[26px]" faded>
          <path d="M5 2.500H13V7H5ZM5 12H13V15.500H5Z" fill="#e5e5e5" stroke="#999" /><rect x="2.500" y="6.500" width="13.500" height="6.500" rx="1.500" fill="#bbb" stroke="#888" />
        </Sm>
        <Sm>
          <rect x="1.500" y="1.500" width="14.500" height="13.500" stroke="#777" strokeDasharray="2 1.400" fill="#dcdcdc" />
          <circle cx="6.500" cy="6" r="4.800" fill="#5f93c7" /><path d="M6.500 5V9M6.500 2.800V4" stroke="#fff" strokeWidth="1.600" />
          <g transform="translate(8 7) scale(.7)"><Cursor /></g>
        </Sm>
        <Arrow />
      </div>
      <div className="flex h-[269px] shrink-0 flex-col border border-[#b4b4b4] bg-white">
        <div className="flex h-[17px] shrink-0 border-b border-[#b4b4b4] bg-gradient-to-b from-[#fafafa] to-[#ececec] text-[11px] text-[#262626]">
          <div className="flex w-[100px] items-center border-r border-[#c4c4c4] pl-[2px] pt-[2px]">Feature</div>
          <div className="flex items-center pl-[2px] pt-[2px]">Value</div>
        </div>
      </div>
      <div className="flex h-[35px] shrink-0 items-center pl-[5px]">
        <span className="w-[41px]">Mode</span>
        <div className="flex h-[24px] w-[79px] shrink-0 items-center justify-between rounded-[3px] border border-[#b0b0b0] bg-gradient-to-b from-white to-[#f0f0f0] pl-[4px] pr-[6px]">
          <span className="whitespace-nowrap">Current l</span>
          <svg viewBox="0 0 8 5" className="h-[5px] w-[8px] shrink-0"><path d="M0 .3H8L4 4.800Z" fill="#555" /></svg>
        </div>
        <div className="ml-[6px] flex items-center gap-[5px] text-[#262626]"><Check /><span className="whitespace-nowrap tracking-[-0.15px]">Auto open form</span></div>
      </div>
      <div className="flex h-[26px] shrink-0 items-center pl-[5px] font-normal text-[#a8a8a8]">
        <span className="w-[36px]">View</span>
        <div className="flex h-[24px] w-[79px] items-center justify-between rounded-[3px] border border-[#c4c4c4] bg-[#f0f0f0] pl-[4px] pr-[7px]">
          Tree
          <svg viewBox="0 0 8 5" className="h-[5px] w-[8px]"><path d="M0 .3H8L4 4.800Z" fill="#aaa" /></svg>
        </div>
        <div className={`${BTN} ml-[95px] h-[19px] w-[36px] text-[11px] font-medium tracking-[-0.2px] text-black`}>Help</div>
      </div>
    </div>
  );
}

function Desktop() {
  return (
    <div className="flex w-[70px] shrink-0 flex-col overflow-hidden bg-[#0c1a37] text-[#8c8c8c]">
      <div className="flex h-[23px] shrink-0 items-center gap-[19px] border-b border-[#101018] bg-[#1a1a29] pl-[20px] text-[14px] font-bold text-[#5d5d6c]">
        <FaApple className="-mt-[2px] size-[15px] shrink-0" /><span>Ch</span>
      </div>
      <div className="h-[107px] shrink-0 bg-gradient-to-b from-[#081831] to-[#101f42]" />
      <div className="flex h-[601px] shrink-0 flex-col overflow-hidden rounded-l-[6px] border-l border-t border-[#606060] bg-[#252525]">
        <div className="flex h-[32px] shrink-0 items-center gap-[8px] border-b border-black bg-[#2d2d2d] pl-[12px]">
          <div className="flex size-[12px] shrink-0 items-center justify-center rounded-full bg-[#626262]"><div className="size-[4px] rounded-full bg-[#2b2b2b]" /></div>
          <div className="size-[12px] shrink-0 rounded-full bg-[#626262]" />
          <div className="size-[12px] shrink-0 rounded-full bg-[#626262]" />
        </div>
        <div className="flex h-[105px] shrink-0 flex-col border-b border-black bg-[#2e2e2e]">
          <div className="flex h-[25px] items-end pb-[1px] pl-[10px] text-[13px] font-bold leading-[18px] text-[#9a9a9a]">Home</div>
          <div className="ml-[4px] h-[3px] w-[50px] rounded bg-[#e2dfe2]" />
          <svg viewBox="0 -1 69 77" className="h-[77px] w-[69px]" fill="none">
            <path d="M28 38H18V15H36V22" stroke="#a8651a" strokeWidth="3" /><path d="M16.500 39V13.500H37.500V20" stroke="#c2913f" strokeWidth=".8" />
            <path d="M20.500 18V14L23 13Q24 10.500 26.500 10.500Q29 10.500 30 13L32.500 14V18Z" fill="#2e2e2e" stroke="#888" />
            <rect x="29.500" y="22.500" width="13.500" height="17" fill="#2e2e2e" stroke="#a4a4a4" />
            <path d="M48.500 23L51 25.500L53.500 23" stroke="#a0a0a0" strokeWidth="1.700" />
            <text x="18.500" y="54.500" fontSize="10.500" fontFamily="Inter, sans-serif" fontWeight="600" fill="#959595">Paste</text>
            <path d="M66 8L69 14M65 20L69 17" stroke="#47647f" strokeWidth="1.400" />
            <path d="M69 30.500H63.500V43.500H69" stroke="#555" />
            <path d="M69 55L63.500 61L69 66" stroke="#c99a4a" strokeWidth="1.500" fill="#574427" />
          </svg>
        </div>
        <div className="flex h-[36px] shrink-0">
          <div className="w-[38px] shrink-0 border-b border-[#505050] bg-[#323232]" />
          <div className="mt-[4px] flex flex-1 items-center rounded-tl-[3px] border-l border-t border-[#505050] pl-[8px]">
            <svg viewBox="0 0 17 19" className="-mt-[3px] h-[19px] w-[17px] shrink-0" fill="none" stroke="#d2d2d2" strokeWidth="1.100"><path d="M5 1H11.500L16 5.500V14.500H5ZM11.500 1V5.500H16M5 3.500H1.500V18H12V14.500" /></svg>
          </div>
        </div>
        <div className="flex flex-1 flex-col items-end pt-[7px]"><div className="h-[126px] w-[4px] border-y-2 border-l-2 border-[#5277bb] bg-[#e8e8e8]" /></div>
        <div className="flex h-[23px] shrink-0 items-center whitespace-nowrap border-b border-t border-b-[#666] border-t-black bg-gradient-to-b from-[#484848] to-[#383838] pl-[13px] text-[12px] text-[#e4e4e4]">Copy to w</div>
      </div>
      <div className="flex-1 bg-gradient-to-b from-[#4b526a] via-[#434b66] to-[#535b74]" />
    </div>
  );
}

export default function App() {
  return (
    <div className="relative flex h-[873px] w-[1121px] overflow-hidden bg-[#ebebeb] font-['Inter',sans-serif] leading-none tracking-[-0.07px]">
      <div className="flex w-[1051px] shrink-0 flex-col">
        <TopToolbar />
        <SecondToolbar />
        <div className="flex flex-1">
          <div className="relative h-[792px] w-[789px] shrink-0 overflow-hidden border-b border-r border-[#b4b4b4] bg-white">
            <MapCanvas />
            <div className="absolute left-[60px] top-[19px] h-[545px] w-[688px] rounded-[6px] shadow-[0_10px_22px_rgba(0,0,0,0.45)]" />
          </div>
          <div className="flex w-[6px] shrink-0 flex-col items-center pt-[388px]"><svg viewBox="0 0 2 16" className="h-[16px] w-[2px]"><path d="M1 0V16" stroke="#b5b5b5" strokeDasharray="1 2" /></svg></div>
          <SidePanel />
        </div>
      </div>
      <Desktop />
      <Dialog />
    </div>
  );
}
